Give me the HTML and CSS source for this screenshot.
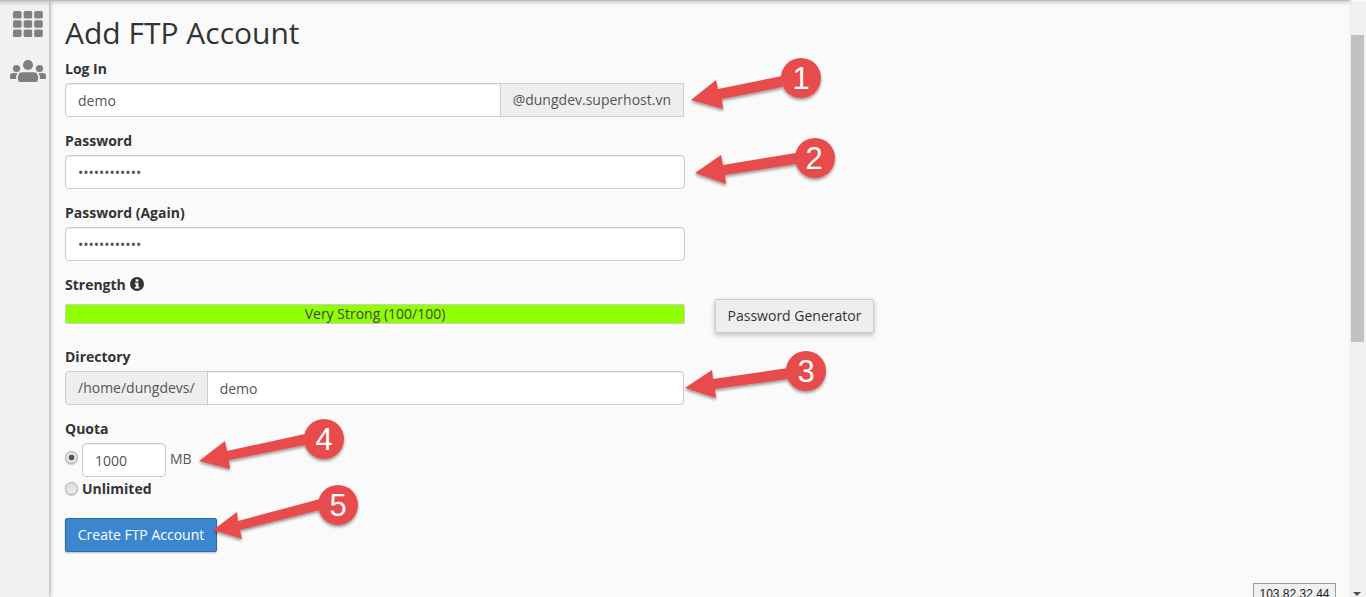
FILE: index.html
```html
<!DOCTYPE html>
<html lang="en">
<head>
    <meta charset="UTF-8" />
    <title>Add FTP Account</title>
    <link rel="stylesheet" href="styles.css">
</head>
<body>
    <div class="window">
        <div class="top-line"></div>
        <div class="columns">
            <div class="sidebar">
                <svg class="icon-grid" width="30" height="26" viewBox="0 0 30 26">
                    <rect x="0" y="0" width="8.6" height="7.4" rx="1.5" />
                    <rect x="10.6" y="0" width="8.6" height="7.4" rx="1.5" />
                    <rect x="21.2" y="0" width="8.6" height="7.4" rx="1.5" />
                    <rect x="0" y="9.3" width="8.6" height="7.4" rx="1.5" />
                    <rect x="10.6" y="9.3" width="8.6" height="7.4" rx="1.5" />
                    <rect x="21.2" y="9.3" width="8.6" height="7.4" rx="1.5" />
                    <rect x="0" y="18.6" width="8.6" height="7.4" rx="1.5" />
                    <rect x="10.6" y="18.6" width="8.6" height="7.4" rx="1.5" />
                    <rect x="21.2" y="18.6" width="8.6" height="7.4" rx="1.5" />
                </svg>
                <svg class="icon-users" width="36" height="22" viewBox="0 0 36 22">
                    <circle cx="18" cy="5" r="5" />
                    <circle cx="6.5" cy="8.5" r="3.6" />
                    <circle cx="29.5" cy="8.5" r="3.6" />
                    <path d="M0 19v-3.5c0-1.6 1.2-2.6 2.6-2.6h5.2c-1 1-1.6 2.3-1.6 3.8V19z" />
                    <path d="M36 19v-3.5c0-1.6-1.2-2.6-2.6-2.6h-5.2c1 1 1.6 2.3 1.6 3.8V19z" />
                    <path d="M8 20v-3.2c0-2.6 1.9-4.6 4.4-4.6h11.2c2.5 0 4.4 2 4.4 4.6V20c0 1.2-1 2-2.2 2H10.200c-1.200 0-2.200-.8-2.200-2z" />
                </svg>
            </div>
            <div class="content">
                <h1>Add FTP Account</h1>

                <div class="form-group">
                    <label>Log In</label>
                    <div class="input-group">
                        <input type="text" value="demo">
                        <span class="addon addon-right">@dungdev.superhost.vn</span>
                    </div>
                </div>

                <div class="form-group">
                    <label>Password</label>
                    <input class="wide" type="password" value="demodemodemo">
                </div>

                <div class="form-group">
                    <label>Password (Again)</label>
                    <input class="wide" type="password" value="demodemodemo">
                </div>

                <div class="form-group strength-group">
                    <div class="strength-col">
                        <label>Strength
                            <svg class="icon-info" width="14" height="14" viewBox="0 0 14 14">
                                <circle cx="7" cy="7" r="7" fill="#333" />
                                <rect x="5.600" y="2.300" width="2.800" height="2.300" fill="#fafafa" />
                                <path d="M4.800 5.700h3.600v4.300h1v1.600H4.800V10h1V7.300h-1z" fill="#fafafa" />
                            </svg>
                        </label>
                        <div class="strength-bar">Very Strong (100/100)</div>
                    </div>
                    <button class="btn-default">Password Generator</button>
                </div>

                <div class="form-group">
                    <label>Directory</label>
                    <div class="input-group">
                        <span class="addon addon-left">/home/dungdevs/</span>
                        <input type="text" value="demo">
                    </div>
                </div>

                <div class="quota">
                    <label>Quota</label>
                    <div class="quota-row">
                        <input class="radio" type="radio" name="quota" checked>
                        <input class="quota-input" type="text" value="1000">
                        <span class="unit">MB</span>
                    </div>
                    <div class="unlimited-row">
                        <input class="radio" type="radio" name="quota">
                        <b>Unlimited</b>
                    </div>
                </div>

                <button class="btn-primary">Create FTP Account</button>
            </div>
            <div class="scrollbar">
                <div class="scroll-thumb"></div>
                <div class="scroll-arrow"></div>
            </div>
        </div>
    </div>

    <div class="ip-box">103.82.32.44</div>

    <!-- numbered arrows drawn on top of the screenshot -->
    <svg class="notes" width="1366" height="597" viewBox="0 0 1366 597">
        <defs>
            <filter id="shade" x="-20%" y="-30%" width="140%" height="170%">
                <feDropShadow dx="0" dy="2" stdDeviation="1.500" flood-color="#000" flood-opacity="0.4" />
            </filter>
        </defs>
        <g class="note" filter="url(#shade)">
            <path d="M691 100 L716 80 L718 89 L782 76 L782 87 L722 99 L723 109 Z" />
            <circle cx="801" cy="78" r="20" />
        </g>
        <text x="801" y="89" class="num">1</text>
        <g class="note" filter="url(#shade)">
            <path d="M695 173 L721 155 L723 165 L796 153 L796 164 L725 175 L726 184 Z" />
            <circle cx="815" cy="158" r="20" />
        </g>
        <text x="814" y="169" class="num">2</text>
        <g class="note" filter="url(#shade)">
            <path d="M685 388 L712 370 L713 379 L788 368 L788 379 L715 389 L716 398 Z" />
            <circle cx="806" cy="371" r="20" />
        </g>
        <text x="806" y="382" class="num">3</text>
        <g class="note" filter="url(#shade)">
            <path d="M199 461 L225 441 L227 451 L305 434 L305 445 L229 460 L230 469 Z" />
            <circle cx="324" cy="439" r="20" />
        </g>
        <text x="324" y="450" class="num">4</text>
        <g class="note" filter="url(#shade)">
            <path d="M213 530 L237 512 L238 521 L320 499 L320 510 L240 530 L242 539 Z" />
            <circle cx="338" cy="505" r="20" />
        </g>
        <text x="338" y="516" class="num">5</text>
    </svg>
</body>
</html>
```

FILE: styles.css
```css
html, body {
    margin: 0;
    padding: 0;
    height: 100%;
    overflow: hidden;
}

body {
    font-family: "Open Sans", Arial, sans-serif;
    font-size: 14px;
    line-height: 20px;
    color: #333;
    background: #fafafa;
}

.window {
    display: flex;
    flex-direction: column;
    height: 597px;
}

.top-line {
    height: 1px;
    margin-right: 17px;
    background: #bbb;
    box-shadow: 0 0 4px 1px rgba(0, 0, 0, 0.3);
    position: relative;
    z-index: 2;
}

.columns {
    display: flex;
    flex: 1;
    min-height: 0;
}

.sidebar {
    width: 49px;
    background: #f1f1f1;
    box-shadow: 1px 0 4px rgba(0, 0, 0, 0.35);
    display: flex;
    flex-direction: column;
    align-items: center;
    padding-top: 10px;
    position: relative;
    z-index: 1;
}

.sidebar svg {
    fill: #808080;
}

.icon-grid {
    margin-left: 6px;
}

.icon-users {
    margin-top: 23px;
    margin-left: 6px;
}

.content {
    flex: 1;
    padding: 12px 0 0 16px;
    min-width: 0;
}

h1 {
    font-size: 30px;
    font-weight: 400;
    line-height: 40px;
    margin: 0 0 6px 0;
    color: #333;
}

label {
    display: block;
    font-weight: 700;
    margin-bottom: 4px;
}

input {
    font-family: inherit;
    font-size: 14px;
    color: #555;
}

input[type="text"], input[type="password"] {
    height: 34px;
    box-sizing: border-box;
    padding: 6px 12px;
    border: 1px solid #ccc;
    border-radius: 4px;
    background: #fff;
    box-shadow: inset 0 1px 1px rgba(0, 0, 0, 0.075);
    outline: none;
}

.form-group {
    margin-bottom: 14px;
}

.wide {
    width: 620px;
    display: block;
}

.input-group {
    display: flex;
    width: 619px;
    height: 34px;
}

.input-group input {
    flex: 1;
    min-width: 0;
}

.input-group input:first-child {
    border-radius: 4px 0 0 4px;
}

.input-group input:last-child {
    border-radius: 0 4px 4px 0;
    border-left: 0;
}

.addon {
    box-sizing: border-box;
    border: 1px solid #ccc;
    background: #eee;
    color: #555;
    padding: 6px 12px;
    white-space: nowrap;
}

.addon-right {
    border-left: 1px solid #ccc;
    margin-left: -1px;
}

.addon-left {
    border-radius: 4px 0 0 4px;
}

.strength-group {
    display: flex;
    align-items: flex-end;
    gap: 30px;
    margin-bottom: 23px;
}

.strength-col {
    width: 620px;
}

.strength-col label {
    margin-bottom: 9px;
}

.icon-info {
    vertical-align: -1px;
    margin-left: 1px;
}

.strength-bar {
    box-sizing: border-box;
    height: 20px;
    line-height: 18px;
    border: 1px solid #ccc;
    border-radius: 2px;
    background: #90ff00;
    text-align: center;
    color: #444;
}

.btn-default {
    font-family: inherit;
    font-size: 14px;
    height: 34px;
    width: 159px;
    padding: 0 0 2px 0;
    margin-bottom: -9px;
    border: 1px solid #ccc;
    border-radius: 2px;
    background: #eee;
    color: #333;
    box-shadow: 0 2px 5px rgba(0, 0, 0, 0.26);
}

.quota {
    margin-bottom: 19px;
}

.quota label {
    margin-bottom: 4px;
}

.quota-row {
    display: flex;
    align-items: flex-start;
}

.radio {
    appearance: none;
    width: 13px;
    height: 13px;
    margin: 8px 4px 0 0;
    border: 1px solid #aaa;
    border-radius: 50%;
    background: linear-gradient(#ddd, #eee);
    box-shadow: 0 1px 1px rgba(0, 0, 0, 0.2);
    box-sizing: border-box;
}

.radio:checked {
    background: radial-gradient(circle, #555 0 2.5px, #e4e4e4 3.2px);
}

.quota-input {
    width: 84px;
}

.unit {
    margin: 6px 0 0 4px;
    color: #555;
}

.unlimited-row {
    display: flex;
    align-items: flex-start;
    margin-top: 2px;
}

.unlimited-row .radio {
    margin-top: 3px;
}

.btn-primary {
    font-family: inherit;
    font-size: 14px;
    height: 34px;
    width: 152px;
    padding: 0 0 2px 0;
    border: 1px solid #2e6da4;
    border-radius: 2px;
    background: #3b87cf;
    color: #fff;
    box-shadow: 0 1px 2px rgba(0, 0, 0, 0.25);
}

.scrollbar {
    width: 17px;
    background: #f1f1f1;
    position: relative;
}

.scroll-thumb {
    width: 13px;
    height: 307px;
    margin: 34px 0 0 2px;
    background: #c1c1c1;
}

.scroll-arrow {
    position: absolute;
    left: 4px;
    bottom: 1px;
    width: 0;
    height: 0;
    border-left: 4px solid transparent;
    border-right: 4px solid transparent;
    border-top: 4px solid #505050;
}

.ip-box {
    position: absolute;
    left: 1253px;
    top: 583px;
    width: 83px;
    height: 24px;
    box-sizing: border-box;
    border: 1px solid #999;
    background: #f0f0f0;
    font-family: "Liberation Sans", Arial, sans-serif;
    font-size: 12px;
    line-height: 20px;
    text-align: center;
    color: #222;
}

.notes {
    position: absolute;
    left: 0;
    top: 0;
    pointer-events: none;
}

.note {
    fill: #e84b4b;
}

.num {
    font-family: "Liberation Sans", Arial, sans-serif;
    font-size: 31px;
    fill: #fff;
    text-anchor: middle;
}
```
